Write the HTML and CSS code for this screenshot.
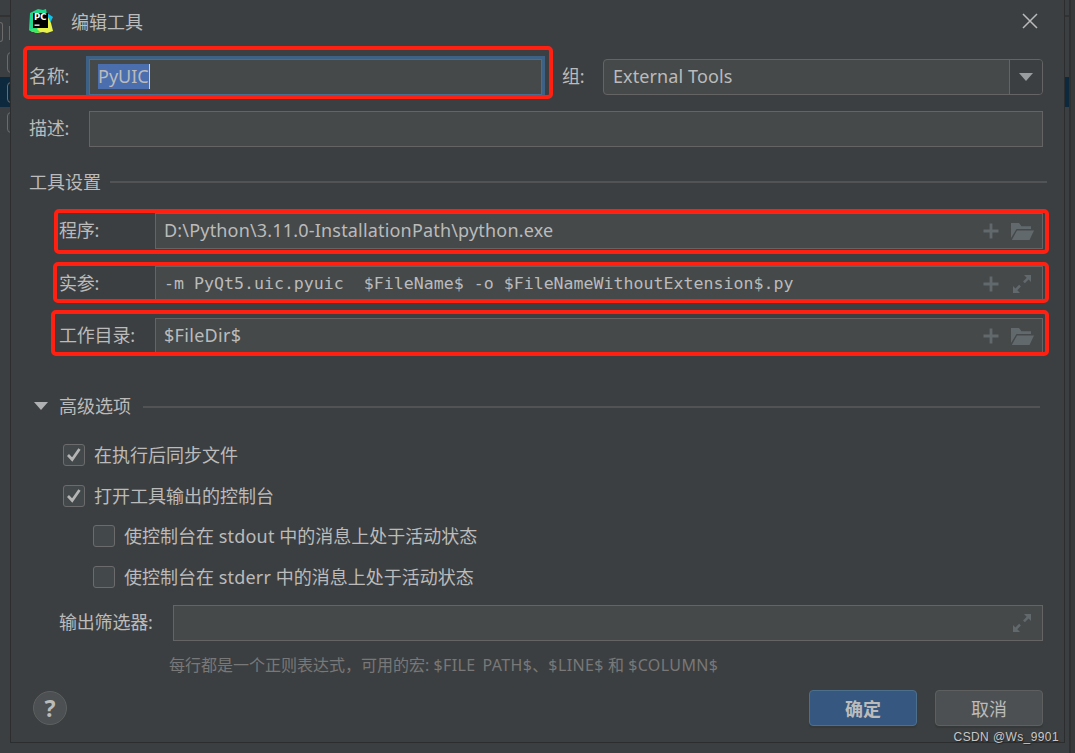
FILE: index.html
```html
<!DOCTYPE html>
<html lang="zh-CN">
<head>
    <meta charset="UTF-8">
    <meta name="viewport" content="width=device-width, initial-scale=1.0">
    <title>编辑工具</title>
    <link rel="stylesheet" href="styles.css">
</head>
<body>
    <svg class="defs" width="0" height="0">
        <symbol id="plus" viewBox="0 0 16 16">
            <path d="M6.600 .5h2.800v6.100h6.100v2.800H9.400v6.100H6.600V9.400H.5V6.600h6.100z"/>
        </symbol>
        <symbol id="folder" viewBox="0 0 23 17">
            <path d="M0 15V0h8l2.500 3.200H20v2.800H5.500z"/>
            <path d="M6 7.500h17L18.500 17H.8z"/>
        </symbol>
        <symbol id="expand" viewBox="0 0 18 18">
            <path d="M11 0h7v7l-2.400-2.400-3.800 3.600-1.700-1.700 3.600-3.800z"/>
            <path d="M7 18H0v-7l2.400 2.400 3.800-3.600 1.700 1.700-3.600 3.800z"/>
        </symbol>
        <symbol id="check" viewBox="0 0 20 20">
            <path d="M4 10l4.200 4.500L15.500 4" fill="none" stroke="#b4b4b4" stroke-width="2.700"/>
        </symbol>
    </svg>

    <div class="screen">
        <div class="behind behind-left">
            <span class="stub stub-wide"></span>
            <span class="stub"></span>
            <span class="stub selected"></span>
            <span class="stub"></span>
        </div>

        <div class="dialog">
            <div class="titlebar">
                <svg class="logo" width="26" height="26" viewBox="0 0 26 26">
                    <path d="M2 5L10 1l5 1 3-1 1 6-4 13-11 4-3-2z" fill="#21d789"/>
                    <path d="M19 5l6 4-3 6-4-2z" fill="#07c3f2"/>
                    <path d="M8 22L20 9l3 6 2 8-6 2-4-1-6 1-6-2z" fill="#e9f24a"/>
                    <path d="M1 22l7-2 4 4-4 1z" fill="#3bea62"/>
                    <rect x="5" y="5" width="15" height="15" fill="#000"/>
                    <text x="6" y="12.300" class="logo-text">PC</text>
                    <rect x="6.500" y="16.500" width="5" height="1.300" fill="#fff"/>
                </svg>
                <span class="title">编辑工具</span>
                <svg class="close" width="16" height="16" viewBox="0 0 16 16">
                    <path d="M1 1l14 14M15 1L1 15" stroke="#b8babb" stroke-width="1.500"/>
                </svg>
            </div>

            <div class="row row-name">
                <label class="label">名称:</label>
                <div class="field focused"><span class="selection">PyUIC</span></div>
                <label class="label label-group">组:</label>
                <div class="combo">
                    <span class="combo-text">External Tools</span>
                    <span class="combo-arrow"><i class="triangle"></i></span>
                </div>
                <div class="mark mark-name"></div>
            </div>

            <div class="row row-desc">
                <label class="label">描述:</label>
                <div class="field"></div>
            </div>

            <div class="section"><span>工具设置</span><hr></div>

            <div class="row row-tool">
                <label class="label">程序:</label>
                <div class="field">
                    <span class="value path">D:\Python\3.11.0-InstallationPath\python.exe</span>
                    <svg class="icon" width="16" height="16"><use href="#plus"/></svg>
                    <svg class="icon folder" width="23" height="17"><use href="#folder"/></svg>
                </div>
                <div class="mark mark-program"></div>
            </div>
            <div class="row row-tool row-args">
                <label class="label">实参:</label>
                <div class="field">
                    <span class="value mono">-m PyQt5.uic.pyuic  $FileName$ -o $FileNameWithoutExtension$.py</span>
                    <svg class="icon" width="16" height="16"><use href="#plus"/></svg>
                    <svg class="icon expand" width="18" height="18"><use href="#expand"/></svg>
                </div>
                <div class="mark mark-args"></div>
            </div>
            <div class="row row-tool row-dir">
                <label class="label">工作目录:</label>
                <div class="field">
                    <span class="value dir">$FileDir$</span>
                    <svg class="icon" width="16" height="16"><use href="#plus"/></svg>
                    <svg class="icon folder" width="23" height="17"><use href="#folder"/></svg>
                </div>
                <div class="mark mark-dir"></div>
            </div>

            <div class="section section-advanced"><i class="triangle"></i><span>高级选项</span><hr></div>

            <div class="options">
                <div class="option"><svg class="box" width="22" height="22"><use href="#check"/></svg>在执行后同步文件</div>
                <div class="option"><svg class="box" width="22" height="22"><use href="#check"/></svg>打开工具输出的控制台</div>
                <div class="option nested"><span class="box"></span><span>使控制台在 <span class="stream">stdout</span> 中的消息上处于活动状态</span></div>
                <div class="option nested"><span class="box"></span><span>使控制台在 <span class="stream">stderr</span> 中的消息上处于活动状态</span></div>
            </div>

            <div class="row row-filter">
                <label class="label">输出筛选器:</label>
                <div class="field">
                    <svg class="icon expand" width="18" height="18"><use href="#expand"/></svg>
                </div>
            </div>
            <div class="hint">每行都是一个正则表达式，可用的宏: <span class="macro">$FILE PATH$</span>、<span class="macro">$LINE$</span> 和 <span class="macro">$COLUMN$</span></div>

            <div class="footer">
                <span class="help">?</span>
                <button class="button primary">确定</button>
                <button class="button">取消</button>
            </div>
        </div>

        <div class="behind behind-right"></div>
        <div class="watermark">CSDN @Ws_9901</div>
    </div>
</body>
</html>
```
FILE: styles.css
```css
* {
    box-sizing: border-box;
}
body {
    margin: 0;
    background: #3c3f41;
    color: #bbbbbb;
    font-family: "Noto Sans", "Noto Sans CJK SC", sans-serif;
    font-size: 18px;
    line-height: 24px;
}
.defs {
    position: absolute;
}
.screen {
    position: relative;
    display: flex;
    width: 1075px;
    height: 753px;
    overflow: hidden;
}

/* window behind the dialog */
.behind-left {
    width: 10px;
    padding-top: 15px;
    overflow: hidden;
}
.stub {
    display: flex;
    height: 30px;
    padding: 5px 0 4px 7px;
}
.stub::before {
    content: "";
    flex: none;
    width: 12px;
    border: 1px solid #6b6b6b;
    border-radius: 4px;
}
.stub-wide {
    height: 32px;
    border-top: 2px solid #323232;
    justify-content: space-between;
    padding: 5px 0;
}
.stub-wide::before {
    width: 2px;
    border-left: 0;
    border-radius: 0 3px 3px 0;
}
.stub-wide::after {
    content: "";
    width: 1px;
    height: 14px;
    margin-top: 4px;
    background: #4a6d91;
}
.selected {
    background: #0d293e;
}
.behind-right {
    flex: 1;
    border-right: 4px solid #37393b;
    background: linear-gradient(#323232, #323232) 0 15px / 4px 2px no-repeat,
        linear-gradient(#0d293e, #0d293e) 0 77px / 4px 30px no-repeat,
        linear-gradient(#303030, #303030) 4px 0 / 2px 100% no-repeat;
}

.dialog {
    flex: none;
    width: 1055px;
    height: 743px;
    padding-right: 21px;
    border: 1px solid #2b2d2e;
    border-top: 0;
}
.titlebar {
    display: flex;
    align-items: center;
    height: 44px;
    padding-left: 17px;
}
.logo {
    margin-top: -2px;
}
.logo-text {
    font: bold 8.500px "DejaVu Sans", sans-serif;
    fill: #fff;
}
.title {
    flex: 1;
    margin-left: 17px;
}
.close {
    margin: -2px 5px 0 0;
}

.row {
    position: relative;
    display: flex;
    align-items: center;
    height: 36px;
    padding-left: 18px;
}
.label {
    width: 60px;
    padding-bottom: 2px;
    letter-spacing: -0.2px;
    white-space: nowrap;
}
.field {
    flex: 1;
    display: flex;
    align-items: center;
    height: 36px;
    padding: 0 10px 0 8px;
    border: 1px solid #646464;
    background: #45494a;
}
.row-name {
    margin-top: 15px;
}
.focused {
    flex: none;
    width: 453px;
    padding-bottom: 2px;
    border-color: #466d94;
    box-shadow: 0 0 0 3px #3d6185;
}
.selection {
    height: 25px;
    border-right: 1px solid #d0d0d0;
    background: #4b6eaf;
}
.label-group {
    width: 41px;
    margin-left: 20px;
}
.combo {
    flex: 1;
    display: flex;
    height: 36px;
    border: 1px solid #646464;
    border-radius: 4px;
    background: #45494a;
}
.combo-text {
    flex: 1;
    padding: 4px 9px;
    letter-spacing: 0.1px;
}
.combo-arrow {
    display: flex;
    align-items: center;
    justify-content: center;
    width: 33px;
    border-left: 1px solid #646464;
    border-radius: 0 3px 3px 0;
    background: #3c3f41;
}
.triangle {
    width: 14px;
    height: 8px;
    background: #afb1b3;
    clip-path: polygon(0 0, 100% 0, 50% 100%);
}
.combo .triangle {
    background: #9a9da0;
}
.row-desc {
    margin-top: 16px;
}

.section {
    display: flex;
    align-items: center;
    height: 24px;
    margin: 23px -4px 19px 0;
    padding-left: 18px;
}
.section hr {
    flex: 1;
    height: 2px;
    margin: 0 0 0 9px;
    border: 0;
    background: #515355;
}
.row-tool {
    margin-top: 18px;
    padding-left: 48px;
}
.row-tool .label {
    width: 96px;
}
.row-args {
    margin-top: 17px;
}
.row-dir {
    margin-top: 16px;
}
.value {
    flex: 1;
    padding-bottom: 2px;
    white-space: pre;
}
.path {
    letter-spacing: 0.180px;
}
.dir {
    letter-spacing: 0.3px;
}
.mono {
    padding-bottom: 0;
    font-family: "DejaVu Sans Mono", "Liberation Mono", monospace;
    font-size: 16.600px;
}
.icon {
    fill: #62696d;
}
.folder {
    margin-left: 12px;
    margin-right: -2px;
}
.expand {
    margin-left: 14px;
    margin-right: 1px;
}

/* red highlight frames */
.mark {
    position: absolute;
    border: 4px solid #ff2011;
    border-radius: 5px;
}
.mark-name {
    left: 12px;
    top: -13px;
    width: 530px;
    height: 53px;
}
.mark-program {
    left: 43px;
    top: -4px;
    width: 995px;
    height: 45px;
}
.mark-args {
    left: 42px;
    top: -4px;
    width: 996px;
    height: 41px;
}
.mark-dir {
    left: 40px;
    top: -8px;
    width: 998px;
    height: 46px;
}

.section-advanced {
    margin: 41px 3px 0 0;
    padding-left: 23px;
}
.section-advanced .triangle {
    margin-right: 11px;
    margin-top: -2px;
}
.section-advanced span {
    margin-top: -2px;
}
.section-advanced hr {
    margin-left: 12px;
}
.options {
    padding: 25px 0 0 52px;
}
.option {
    display: flex;
    align-items: center;
    gap: 9px;
    height: 22px;
    margin-bottom: 19px;
    white-space: nowrap;
}
.nested {
    margin: 0 0 19px 30px;
}
.option:nth-child(2) {
    margin-bottom: 18px;
}
.stream {
    letter-spacing: 0.2px;
}
.box {
    width: 22px;
    height: 22px;
    border: 1px solid #6b6b6b;
    border-radius: 3px;
    background: #43494a;
}
.row-filter {
    margin-top: -2px;
    padding-left: 48px;
}
.row-filter .label {
    width: 114px;
}
.row-filter .field {
    justify-content: flex-end;
}
.hint {
    margin: 12px 0 0 158px;
    color: #787878;
    font-size: 16px;
}
.macro {
    letter-spacing: 0.380px;
    word-spacing: 2.500px;
}

.footer {
    display: flex;
    align-items: center;
    margin-top: 13px;
    padding-left: 22px;
}
.help {
    width: 34px;
    height: 34px;
    margin-right: auto;
    border: 1px solid #5e6060;
    border-radius: 50%;
    background: #4c5052;
    font: bold 23px/32px "Noto Sans", sans-serif;
    text-align: center;
}
.button {
    width: 108px;
    height: 36px;
    margin-left: 18px;
    padding: 2px 0 0;
    border: 1px solid #5e6060;
    border-radius: 4px;
    background: #4c5052;
    box-shadow: 0 2px 1px #36393a;
    color: #bbbbbb;
    font: inherit;
}
.primary {
    border-color: #4c708c;
    background: #365880;
    font-weight: bold;
}
.watermark {
    position: absolute;
    right: 16px;
    bottom: 7px;
    color: #c8c8c8;
    font: 12px/18px "Liberation Sans", sans-serif;
    letter-spacing: 0.400px;
    text-shadow: 1px 1px 1px #222;
}
```
